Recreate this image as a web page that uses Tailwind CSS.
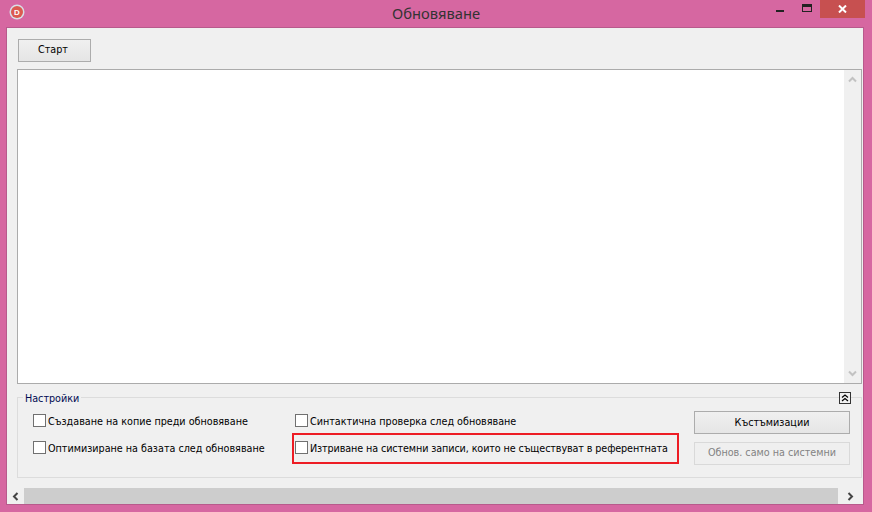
<!DOCTYPE html>
<html lang="bg">
<head>
    <meta charset="UTF-8">
    <title>Обновяване</title>
    <script src="https://cdn.jsdelivr.net/npm/@tailwindcss/browser@4"></script>
</head>
<body class="w-[872px] h-[512px] overflow-hidden bg-[#d667a1] font-['DejaVu_Sans',sans-serif] font-stretch-condensed text-[10.7px] text-black">
    <div class="flex flex-col h-full">
        <!-- title bar -->
        <div class="relative h-[27px] shrink-0 flex justify-center">
            <svg class="absolute left-[9px] top-[4px]" width="16" height="16" viewBox="0 0 16 16">
                <circle cx="8" cy="8" r="7.5" fill="#d8dfe6"/>
                <circle cx="8" cy="8" r="6" fill="#dc5a50"/>
                <text x="8" y="11" text-anchor="middle" font-size="8" font-weight="700" fill="#fff" font-family="Liberation Sans">D</text>
            </svg>
            <span class="font-['Noto_Sans',sans-serif] font-stretch-normal text-[14.7px] leading-[26px] text-[#333]">Обновяване</span>
            <div class="absolute left-[776px] top-[10px] w-[8px] h-[2px] bg-[#222]"></div>
            <div class="absolute left-[802px] top-[4px] w-[10px] h-[8px] border border-t-[3px] border-[#222]"></div>
            <div class="absolute left-[820px] top-0 w-[45px] h-[18px] bg-[#c75050] flex items-center justify-center">
                <svg width="9" height="8" viewBox="0 0 9 8"><path d="M1 0.5 L8 7.5 M8 0.5 L1 7.5" stroke="#fff" stroke-width="2"/></svg>
            </div>
        </div>

        <!-- client area -->
        <div class="flex flex-col w-[858px] h-[478px] ml-[6px] border border-[#b85a8c] bg-[#f0f0f0]">
            <div class="pl-[11px] pt-[11px]">
                <button class="block w-[73px] h-[23px] border border-[#acacac] bg-gradient-to-b from-[#f0f0f0] to-[#e5e5e5] text-center pr-[3px]">Старт</button>
            </div>

            <div class="flex ml-[10px] mr-[1px] mt-[7px] h-[315px] border border-[#ababab] bg-white">
                <div class="flex-1"></div>
                <div class="w-[17px] bg-[#f0f0f0] flex flex-col justify-between items-center py-[6px]">
                    <svg width="9" height="7" viewBox="0 0 9 7"><path d="M1 5.5 L4.5 2 L8 5.5" fill="none" stroke="#c2c2c2" stroke-width="2"/></svg>
                    <svg width="9" height="7" viewBox="0 0 9 7"><path d="M1 1.5 L4.5 5 L8 1.5" fill="none" stroke="#c2c2c2" stroke-width="2"/></svg>
                </div>
            </div>

            <!-- settings group -->
            <div class="relative ml-[10px] mr-[1px] mt-[13px] h-[81px] border border-[#dcdcdc] flex pl-[15px] pt-[16px]">
                <span class="absolute left-[5px] top-[-7px] px-[2px] bg-[#f0f0f0] leading-[16px] text-[#000a50]">Настройки</span>
                <button class="absolute left-[821px] top-[-6px] w-[12px] h-[12px] border border-[#333] bg-[#f0f0f0] flex items-center justify-center">
                    <svg width="8" height="8" viewBox="0 0 8 8"><path d="M1 3.5 L4 1 L7 3.5 M1 7 L4 4.5 L7 7" fill="none" stroke="#000" stroke-width="1.2"/></svg>
                </button>

                <div class="flex flex-col gap-[14px] w-[262px] shrink-0 whitespace-nowrap">
                    <label class="flex items-center gap-[2px] h-[13px]"><span class="shrink-0 w-[13px] h-[13px] border border-[#707070] bg-white"></span><span class="mt-[3px]">Създаване на копие преди обновяване</span></label>
                    <label class="flex items-center gap-[2px] h-[13px]"><span class="shrink-0 w-[13px] h-[13px] border border-[#707070] bg-white"></span><span class="mt-[3px]">Оптимизиране на базата след обновяване</span></label>
                </div>
                <div class="flex flex-col gap-[14px] w-[399px] shrink-0 whitespace-nowrap">
                    <label class="flex items-center gap-[2px] h-[13px]"><span class="shrink-0 w-[13px] h-[13px] border border-[#707070] bg-white"></span><span class="mt-[3px]">Синтактична проверка след обновяване</span></label>
                    <label class="flex items-center gap-[2px] h-[13px]"><span class="shrink-0 w-[13px] h-[13px] border border-[#707070] bg-white"></span><span class="mt-[3px] tracking-[-0.1px]">Изтриване на системни записи, които не съществуват в референтната</span></label>
                </div>
                <div class="flex flex-col gap-[8px] w-[156px] shrink-0 mt-[-3px] whitespace-nowrap">
                    <button class="h-[23px] border border-[#acacac] bg-gradient-to-b from-[#f0f0f0] to-[#e5e5e5] text-center pt-px">Къстъмизации</button>
                    <button class="h-[23px] border border-[#d9d9d9] bg-[#efefef] text-center text-[#838383]">Обнов. само на системни</button>
                </div>
                <div class="absolute left-[274px] top-[35px] w-[387px] h-[31px] border-2 border-[#ed1c24]"></div>
            </div>

            <!-- horizontal scrollbar -->
            <div class="flex mt-auto h-[16px] bg-[#f0f0f0] items-stretch">
                <div class="w-[17px] flex items-center justify-center">
                    <svg width="7" height="9" viewBox="0 0 7 9"><path d="M5.5 1 L2 4.5 L5.5 8" fill="none" stroke="#444" stroke-width="2"/></svg>
                </div>
                <div class="flex-1 bg-[#cdcdcd]"></div>
                <div class="w-[25px] flex items-center justify-center">
                    <svg width="7" height="9" viewBox="0 0 7 9"><path d="M1.5 1 L5 4.5 L1.5 8" fill="none" stroke="#444" stroke-width="2"/></svg>
                </div>
            </div>
        </div>
    </div>
</body>
</html>
